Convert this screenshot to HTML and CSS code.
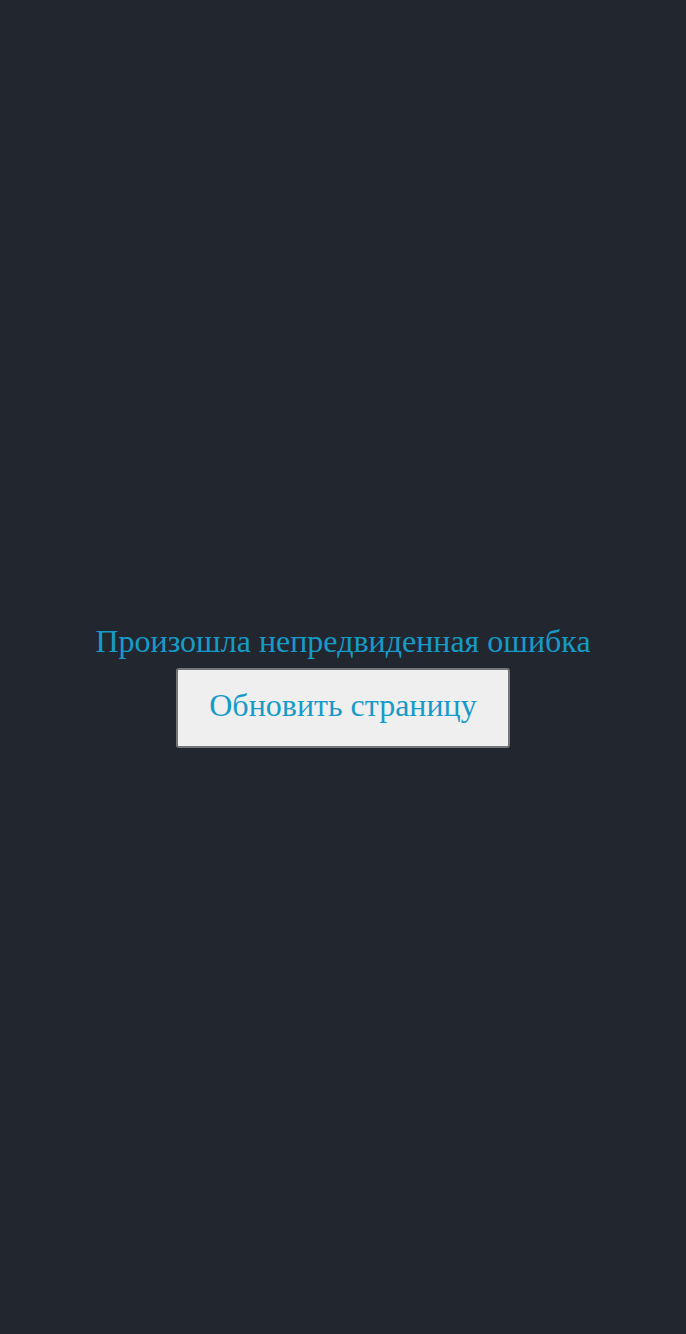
FILE: index.html
```html
<!DOCTYPE html>
<html lang="ru">
<head>
<meta charset="utf-8">
<link rel="stylesheet" href="styles.css">
</head>
<body>
<main class="error">
  <p class="error-text">Произошла непредвиденная ошибка</p>
  <button class="reload-btn" type="button">Обновить страницу</button>
</main>
</body>
</html>
```
FILE: styles.css
```css
html, body {
  margin: 0;
  padding: 0;
  height: 100%;
}
body {
  background: #22262f;
  font-family: "Liberation Serif", "Times New Roman", serif;
}
.error {
  box-sizing: border-box;
  height: 100%;
  padding-top: 36px;
  display: flex;
  flex-direction: column;
  align-items: center;
  justify-content: center;
  color: #169bc9;
}
.error-text {
  margin: 0;
  font-size: 32px;
  line-height: 37px;
}
.reload-btn {
  margin-top: 8px;
  font-family: "Liberation Serif", "Times New Roman", serif;
  font-size: 32px;
  color: #169bc9;
  background: #efefef;
  border: 2px solid #767676;
  border-radius: 3px;
  padding: 17px 31.5px 22px;
}
```
